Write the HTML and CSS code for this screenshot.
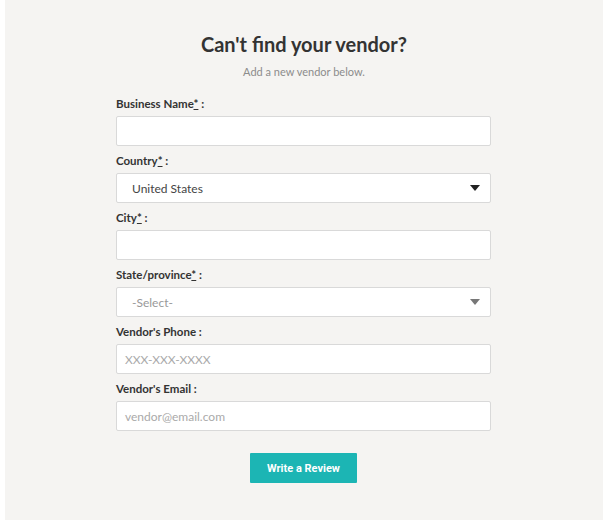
FILE: index.html
```html
<!DOCTYPE html>
<html>
<head>
<meta charset="utf-8">
<link rel="stylesheet" href="styles.css">
</head>
<body>
<div class="panel">
  <h1 class="title">Can't find your vendor?</h1>
  <p class="subtitle">Add a new vendor below.</p>
  <form class="form">
    <div class="field">
      <label class="label">Business Name<span class="req">*</span> :</label>
      <div class="input"></div>
    </div>
    <div class="field">
      <label class="label">Country<span class="req">*</span> :</label>
      <div class="input select"><span class="value">United States</span><span class="arrow"></span></div>
    </div>
    <div class="field">
      <label class="label">City<span class="req">*</span> :</label>
      <div class="input"></div>
    </div>
    <div class="field">
      <label class="label">State/province<span class="req">*</span> :</label>
      <div class="input select"><span class="value muted">-Select-</span><span class="arrow grey"></span></div>
    </div>
    <div class="field">
      <label class="label">Vendor's Phone :</label>
      <div class="input"><span class="placeholder">XXX-XXX-XXXX</span></div>
    </div>
    <div class="field">
      <label class="label">Vendor's Email :</label>
      <div class="input"><span class="placeholder">vendor@email.com</span></div>
    </div>
    <div class="actions">
      <button type="button" class="btn">Write a Review</button>
    </div>
  </form>
</div>
</body>
</html>
```
FILE: styles.css
```css
html, body {
  margin: 0;
  padding: 0;
  background: #ffffff;
}
body {
  font-family: "Lato", "Liberation Sans", sans-serif;
  color: #333;
}
.panel {
  margin: 0 5px;
  height: 520px;
  background: #f5f4f2;
  padding-top: 32px;
  box-sizing: border-box;
}
.title {
  margin: 0;
  text-align: center;
  font-size: 20px;
  line-height: 24px;
  font-weight: 700;
  color: #333;
}
.subtitle {
  margin: 9px 0 0;
  text-align: center;
  font-size: 11px;
  line-height: 14px;
  color: #8c8c8c;
}
.form {
  width: 375px;
  margin: 18px 112px 0 111px;
  display: flex;
  flex-direction: column;
  gap: 8px;
}
.field {
  display: flex;
  flex-direction: column;
  gap: 6px;
}
.label {
  font-size: 11.5px;
  line-height: 13px;
  font-weight: 700;
  color: #333;
}
.req {
  text-decoration: underline;
}
.input {
  height: 30px;
  box-sizing: border-box;
  background: #fff;
  border: 1px solid #d9d9d9;
  border-radius: 2px;
  display: flex;
  align-items: center;
  padding: 0 8px;
  font-size: 12px;
}
.select {
  justify-content: space-between;
  padding: 0 10px 0 15px;
}
.value {
  color: #444;
}
.value.muted {
  color: #999;
}
.placeholder {
  color: #aaa;
}
.arrow {
  width: 0;
  height: 0;
  border-left: 5px solid transparent;
  border-right: 5px solid transparent;
  border-top: 6px solid #222;
}
.arrow.grey {
  border-top-color: #777;
}
.actions {
  display: flex;
  justify-content: center;
  margin-top: 14px;
}
.btn {
  width: 107px;
  height: 30px;
  border: none;
  border-radius: 1px;
  background: #1cb5b4;
  color: #fff;
  font-family: "Roboto", "Liberation Sans", sans-serif;
  font-size: 11px;
  font-weight: 700;
  cursor: pointer;
}
```
